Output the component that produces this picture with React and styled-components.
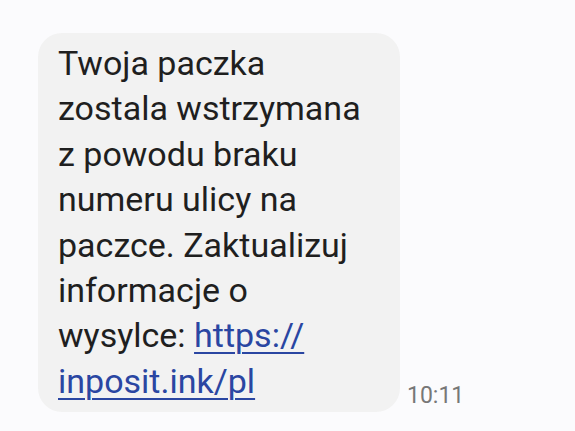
import React from "react";
import styled, { createGlobalStyle } from "styled-components";

const GlobalStyle = createGlobalStyle`
  html, body {
    margin: 0;
    padding: 0;
    background: #fbfbfd;
  }
  body {
    font-family: Roboto, "Noto Sans", sans-serif;
  }
`;

const Screen = styled.div`
  width: 575px;
  height: 431px;
  box-sizing: border-box;
  padding: 33px 0 0 38px;
  overflow: hidden;
`;

const MessageRow = styled.div`
  display: flex;
  align-items: flex-end;
  gap: 7px;
`;

const Bubble = styled.div`
  width: 362px;
  box-sizing: border-box;
  padding: 8px 20px 8px 20px;
  background: #f2f2f2;
  border-radius: 24px;
`;

const MessageText = styled.p`
  margin: 0;
  font-size: 34px;
  line-height: 45.4px;
  color: #1f1f1f;
`;

const Link = styled.a`
  color: #2a46a2;
  text-decoration: underline;
  text-decoration-thickness: 2px;
  text-underline-offset: 5px;
`;

const Time = styled.span`
  font-size: 23px;
  color: #777777;
  padding-bottom: 3px;
`;

const App = () => {
  return (
    <>
      <GlobalStyle />
      <Screen>
        <MessageRow>
          <Bubble>
            <MessageText>
              Twoja paczka zostala wstrzymana z powodu braku numeru ulicy na
              paczce. Zaktualizuj informacje o wysylce:{" "}
              <Link href="#">
                https://
                <wbr />
                inposit.ink/pl
              </Link>
            </MessageText>
          </Bubble>
          <Time>10:11</Time>
        </MessageRow>
      </Screen>
    </>
  );
};

export default App;
